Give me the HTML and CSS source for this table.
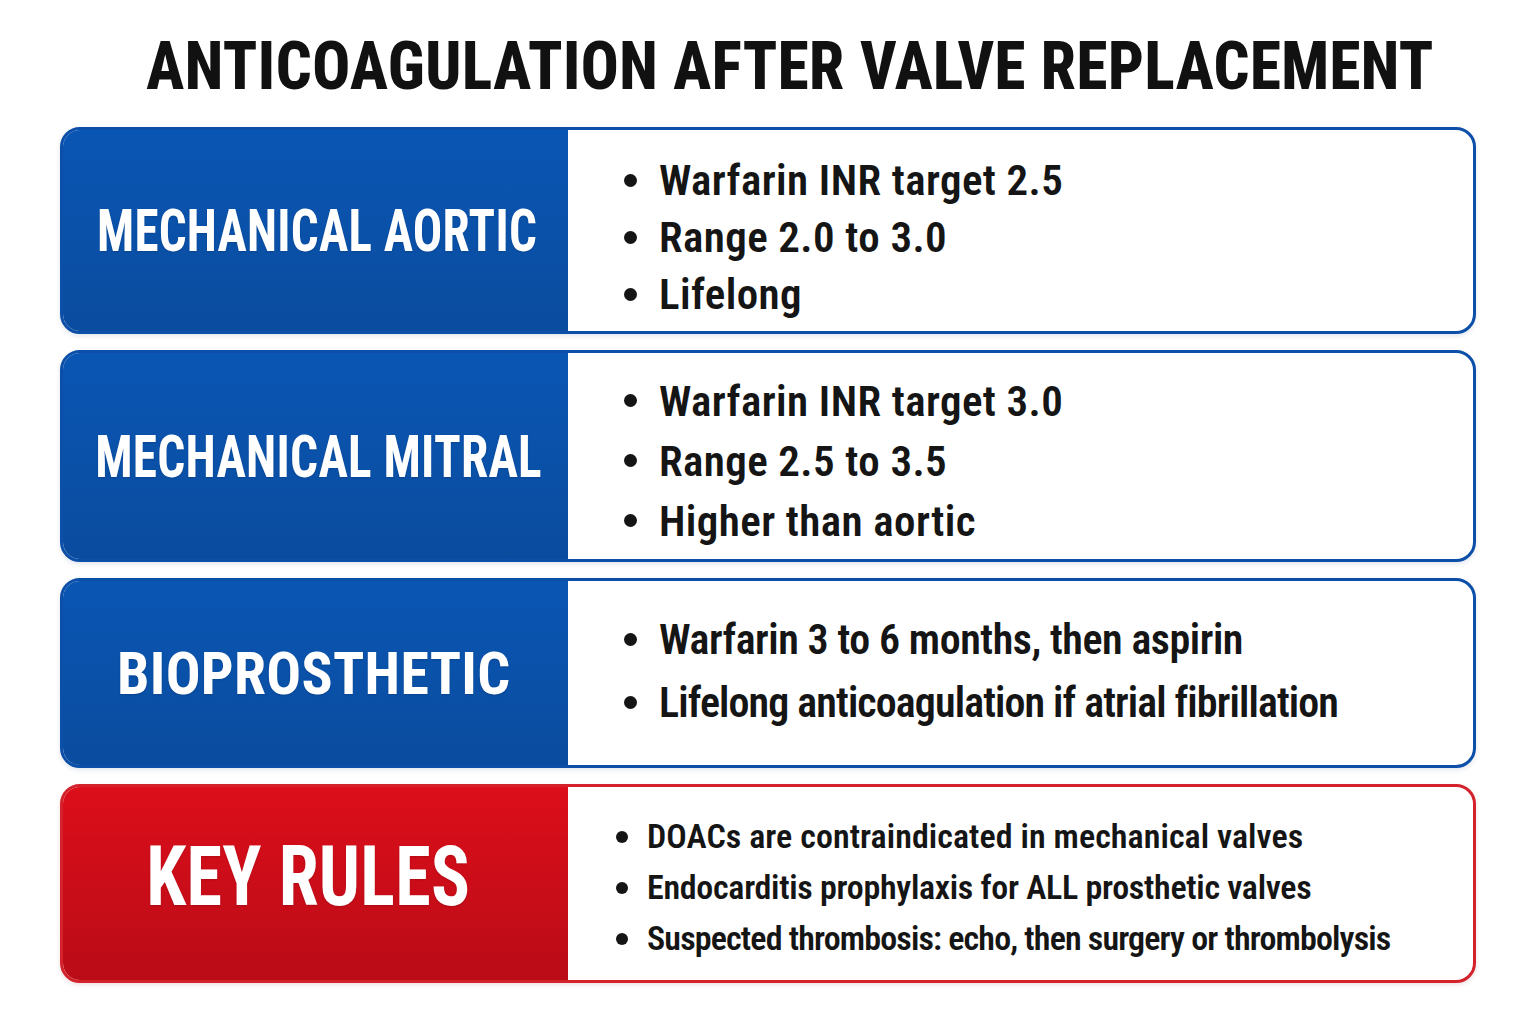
FILE: index.html
```html
<!DOCTYPE html>
<html lang="en">
<head>
<meta charset="utf-8">
<title>Anticoagulation After Valve Replacement</title>
<link rel="stylesheet" href="styles.css">
</head>
<body>
<main class="page">
  <h1 class="title"><span class="squeeze">ANTICOAGULATION AFTER VALVE REPLACEMENT</span></h1>
  <section class="cards">
    <div class="card blue c1">
      <div class="label"><span class="squeeze">MECHANICAL AORTIC</span></div>
      <ul class="items">
        <li>Warfarin INR target 2.5</li>
        <li>Range 2.0 to 3.0</li>
        <li>Lifelong</li>
      </ul>
    </div>
    <div class="card blue c2">
      <div class="label"><span class="squeeze">MECHANICAL MITRAL</span></div>
      <ul class="items">
        <li>Warfarin INR target 3.0</li>
        <li>Range 2.5 to 3.5</li>
        <li>Higher than aortic</li>
      </ul>
    </div>
    <div class="card blue c3">
      <div class="label"><span class="squeeze">BIOPROSTHETIC</span></div>
      <ul class="items">
        <li class="loose">Warfarin 3 to 6 months, then aspirin</li>
        <li class="tight">Lifelong anticoagulation if atrial fibrillation</li>
      </ul>
    </div>
    <div class="card red c4">
      <div class="label big"><span class="squeeze">KEY RULES</span></div>
      <ul class="items small">
        <li class="loose">DOACs are contraindicated in mechanical valves</li>
        <li>Endocarditis prophylaxis for ALL prosthetic valves</li>
        <li class="tight">Suspected thrombosis: echo, then surgery or thrombolysis</li>
      </ul>
    </div>
  </section>
</main>
</body>
</html>
```
FILE: styles.css
```css
* { box-sizing: border-box; }
html, body { margin: 0; padding: 0; background: #ffffff; }
body {
  width: 1536px;
  height: 1024px;
  overflow: hidden;
  font-family: Roboto, "Liberation Sans", sans-serif;
  font-stretch: condensed;
  color: #111111;
}
.page {
  display: flex;
  flex-direction: column;
  align-items: center;
  padding: 27px 60px 0 60px;
}
.title {
  margin: 0 0 0 44px;
  font-size: 66px;
  line-height: 80px;
  font-weight: 800;
  letter-spacing: 0.5px;
  color: #111;
  white-space: nowrap;
}
.squeeze { display: inline-block; white-space: nowrap; }
.title .squeeze { transform: scaleX(0.955); }
.cards {
  width: 100%;
  margin-top: 20px;
  display: flex;
  flex-direction: column;
  gap: 16px;
}
.card {
  display: flex;
  border: 3px solid #0b4fa8;
  border-radius: 20px;
  overflow: hidden;
  background: #ffffff;
  box-shadow: 0 2px 5px rgba(0, 40, 100, 0.12);
}
.card.red { border-color: #d4222c; box-shadow: 0 2px 5px rgba(120, 0, 0, 0.12); }
.c1 { height: 207px; }
.c2 { height: 212px; }
.c3 { height: 190px; }
.c4 { height: 199px; }
.label {
  flex: 0 0 508px;
  width: 508px;
  min-width: 0;
  margin: -3px 0 -3px -3px;
  display: flex;
  align-items: center;
  justify-content: center;
  color: #ffffff;
  font-size: 59px;
  font-weight: 700;
  letter-spacing: 0.3px;
  text-shadow: 0 1px 2px rgba(0,0,0,0.15);
}
.blue .label { background: linear-gradient(180deg, #0a56b4 0%, #0a4c9e 100%); }
.red .label { background: linear-gradient(180deg, #dc0e1a 0%, #b90c17 100%); }
.label .squeeze { transform: scaleX(0.83); }
.c1 .label { padding-left: 7px; }
.c2 .label { padding-left: 10px; }
.c2 .label .squeeze { transform: scaleX(0.835); }
.c3 .label .squeeze { transform: scaleX(0.98); }
.label.big { font-size: 84px; padding-bottom: 14px; padding-right: 12px; }
.label.big .squeeze { transform: scaleX(0.86); }
.items {
  list-style: none;
  margin: 0;
  padding: 14px 0 0 54px;
  display: flex;
  flex-direction: column;
  justify-content: center;
  font-size: 43px;
  letter-spacing: 0.4px;
  font-weight: 600;
  line-height: 57px;
  color: #151515;
}
.items li { position: relative; padding-left: 37px; white-space: nowrap; }
.items li::before {
  content: "";
  position: absolute;
  left: 2px;
  top: 50%;
  width: 13px;
  height: 13px;
  margin-top: -7px;
  border-radius: 50%;
  background: #151515;
}
.c2 .items { line-height: 60px; padding-top: 10px; }
.c3 .items {
  font-size: 42px;
  line-height: 63px;
  padding-top: 0;
  padding-bottom: 4px;
  letter-spacing: -0.6px;
}
.c3 .items li.loose { letter-spacing: -0.45px; }
.c3 .items li.tight { letter-spacing: -0.88px; }
.items.small {
  font-size: 34px;
  line-height: 51px;
  padding: 8px 0 0 46px;
  letter-spacing: -0.3px;
}
.items.small li { padding-left: 33px; }
.items.small li.loose { letter-spacing: 0.05px; }
.items.small li.tight { letter-spacing: -0.85px; }
.items.small li::before { width: 12px; height: 12px; margin-top: -6px; }
```
